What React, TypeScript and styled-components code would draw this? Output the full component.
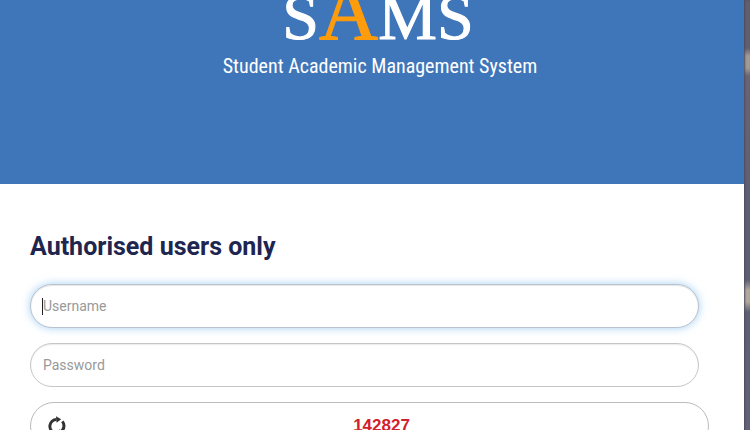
import React from "react";
import styled, { createGlobalStyle } from "styled-components";

const GlobalStyle = createGlobalStyle`
  * { box-sizing: border-box; }
  body {
    margin: 0;
    background: #fff;
    font-family: Roboto, "Liberation Sans", sans-serif;
  }
`;

const Page = styled.div`
  display: grid;
  grid-template-columns: minmax(0, 1fr) 6px;
  height: 100vh;
  overflow: hidden;
`;

const Card = styled.main`
  min-width: 0;
`;

const Backdrop = styled.div`
  background: linear-gradient(
    #605e70 0, #605e70 48px, #a39a94 56px, #a39a94 68px, #6a6474 76px,
    #5f5f74 200px, #5f5f74 280px, #b3a89e 290px, #b3a89e 302px,
    #5f5f74 312px, #64637a 100%
  );
  box-shadow: inset 1px 0 2px #4b4c5c;
`;

const Banner = styled.header`
  display: flex;
  flex-direction: column;
  align-items: center;
  height: 184px;
  color: #fff;
  background: #3f76b9;
  overflow: hidden;
`;

const Wordmark = styled.div`
  display: flex;
  align-items: baseline;
  height: 52px;
  margin-left: 12px;
  font-family: "Liberation Serif", serif;
  font-size: 66px;
  line-height: 24px;
  -webkit-text-stroke: 1px currentColor;
`;

const Accent = styled.span`
  color: #ff9c0c;
  font-size: 82px;
`;

const Tagline = styled.p`
  margin: 0;
  padding-left: 16px;
  font-family: "Roboto Condensed", "Open Sans Condensed", "Liberation Sans", sans-serif;
  font-size: 20px;
  line-height: 28px;
  white-space: nowrap;
`;

const LoginForm = styled.form`
  display: flex;
  flex-direction: column;
  gap: 15px;
  padding: 47px 35px 0 30px;
`;

const Title = styled.h1`
  margin: 0 0 6px;
  color: #20254f;
  font-size: 25px;
  font-weight: 700;
  line-height: 32px;
`;

const Field = styled.label`
  position: relative;
  display: block;
  margin-right: 10px;
`;

const TextBox = styled.input<{ $active?: boolean }>`
  display: block;
  width: 100%;
  height: 44px;
  padding: 0 12px;
  border: 1px solid ${(p) => (p.$active ? "#b9c3cf" : "#c6c6c6")};
  border-radius: 22px;
  outline: none;
  color: #333;
  background: #fff;
  font-family: inherit;
  font-size: 14px;
  box-shadow: ${(p) =>
    p.$active
      ? "inset 0 1px 1px rgba(0,0,0,.1), 0 0 8px rgba(102,175,233,.6)"
      : "inset 0 1px 1px rgba(0,0,0,.08)"};
  &::placeholder { color: #999; opacity: 1; }
`;

const Caret = styled.span`
  position: absolute;
  top: 14px;
  left: 12px;
  width: 1px;
  height: 17px;
  background: #222;
`;

const Captcha = styled.div`
  display: grid;
  grid-template-columns: 20px 1fr 20px;
  align-items: center;
  height: 48px;
  padding: 0 16px;
  border: 1px solid #bbb;
  border-radius: 24px;
`;

const Refresh = styled.button`
  display: flex;
  padding: 0;
  border: 0;
  background: none;
`;

const Code = styled.output`
  padding-left: 24px;
  color: #d3202a;
  font-family: "Liberation Sans", sans-serif;
  font-size: 17px;
  font-weight: 700;
  text-align: center;
`;

export default function App() {
  return (
    <Page>
      <GlobalStyle />
      <Card>
        <Banner>
          <Wordmark>
            S<Accent>A</Accent>MS
          </Wordmark>
          <Tagline>Student Academic Management System</Tagline>
        </Banner>
        <LoginForm>
          <Title>Authorised users only</Title>
          <Field>
            <TextBox $active aria-label="Username" placeholder="Username" autoComplete="off" />
            <Caret />
          </Field>
          <Field>
            <TextBox type="password" aria-label="Password" placeholder="Password" autoComplete="off" />
          </Field>
          <Captcha>
            <Refresh type="button" aria-label="Refresh code">
              <svg width="20" height="20" viewBox="0 0 20 20" fill="none">
                <path d="M7 16.6A6.9 6.9 0 0 1 9.5 3.4" stroke="#333" strokeWidth="3" />
                <path d="M9 .2 14.2 3.2 9.6 6.8Z" fill="#333" />
                <path d="M15.3 5.4A6.9 6.9 0 0 1 12.2 16.4" stroke="#333" strokeWidth="3" />
                <path d="M13 13.3 8.6 16.2 13 19.2Z" fill="#333" />
              </svg>
            </Refresh>
            <Code>142827</Code>
          </Captcha>
        </LoginForm>
      </Card>
      <Backdrop />
    </Page>
  );
}
